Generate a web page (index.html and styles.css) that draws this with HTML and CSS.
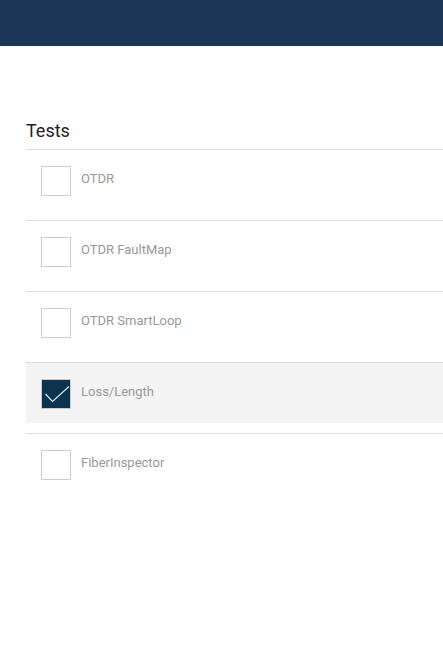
FILE: index.html
```html
<!DOCTYPE html>
<html>
<head>
<meta charset="utf-8">
<link rel="stylesheet" href="styles.css">
</head>
<body>
<header class="topbar"></header>
<section class="tests">
  <h2 class="tests-title">Tests</h2>
  <ul class="test-list">
    <li class="test-item"><div class="row"><span class="box"></span><span class="label">OTDR</span></div></li>
    <li class="test-item"><div class="row"><span class="box"></span><span class="label">OTDR FaultMap</span></div></li>
    <li class="test-item"><div class="row"><span class="box"></span><span class="label">OTDR SmartLoop</span></div></li>
    <li class="test-item"><div class="row selected"><span class="box checked"><svg width="30" height="30" viewBox="0 0 30 30"><polyline points="4.5,15 11.5,22.5 28,7.5" fill="none" stroke="#d8ecf7" stroke-width="1.2"/></svg></span><span class="label">Loss/Length</span></div></li>
    <li class="test-item last"><div class="row"><span class="box"></span><span class="label">FiberInspector</span></div></li>
  </ul>
</section>
</body>
</html>
```

FILE: styles.css
```css
html, body {
  margin: 0;
  padding: 0;
  background: #ffffff;
  font-family: Roboto, "Liberation Sans", sans-serif;
}
.topbar {
  height: 46px;
  background: #1c3658;
}
.tests {
  padding-left: 26px;
}
.tests-title {
  margin: 74px 0 0 0;
  font-size: 18px;
  line-height: 22px;
  font-weight: 400;
  color: #222222;
  padding-bottom: 7px;
  border-bottom: 1px solid #dddddd;
}
.test-list {
  list-style: none;
  margin: 0;
  padding: 0;
}
.test-item {
  padding-bottom: 10px;
  border-bottom: 1px solid #dddddd;
}
.test-item.last {
  border-bottom: none;
}
.row {
  height: 60px;
  display: flex;
  align-items: center;
  padding-left: 15px;
}
.row.selected {
  background: #f4f4f4;
}
.box {
  width: 28px;
  height: 28px;
  border: 1px solid #cccccc;
  background: #ffffff;
  position: relative;
  flex: none;
  margin-top: 2px;
}
.box.checked {
  background: #0a3350;
}
.box.checked svg {
  position: absolute;
  left: -1px;
  top: -1px;
}
.label {
  margin-left: 10px;
  margin-bottom: 4px;
  font-size: 13px;
  color: #999999;
}
```
